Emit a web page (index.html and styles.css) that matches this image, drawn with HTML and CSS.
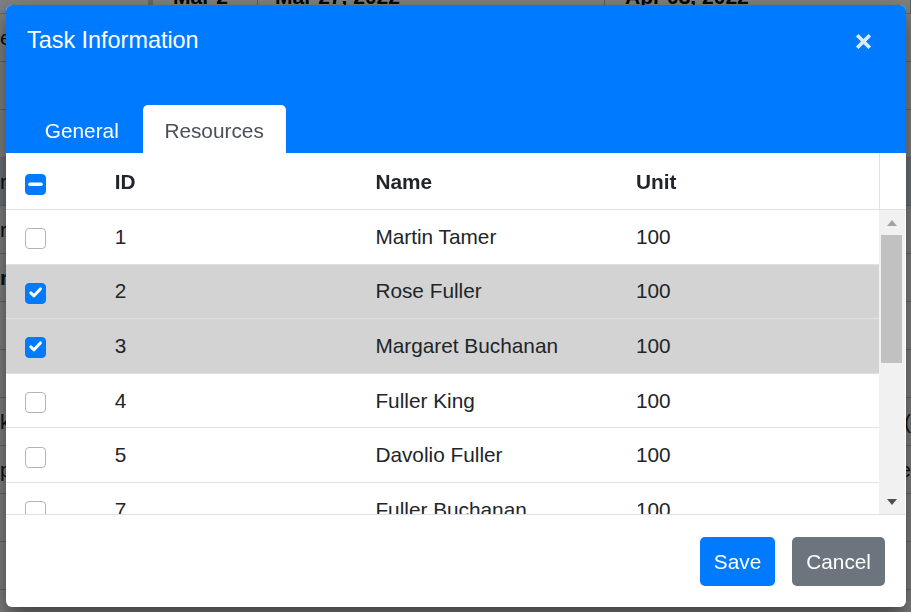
FILE: index.html
```html
<!DOCTYPE html>
<html lang="en">
<head>
<meta charset="utf-8">
<title>Task Information</title>
<link rel="stylesheet" href="styles.css">
</head>
<body>
<div class="page">
  <div class="timeline">
    <div class="tl-cell tl-left"></div>
    <div class="tl-cell tl-a">Mar 2</div>
    <div class="tl-cell tl-b">Mar 27, 2022</div>
    <div class="tl-cell tl-c">Apr 03, 2022</div>
  </div>
  <div class="bg-row"><span class="bg-left">e</span><span class="bg-right"></span></div>
  <div class="bg-row"><span class="bg-left"></span><span class="bg-right"></span></div>
  <div class="bg-row"><span class="bg-left"></span><span class="bg-right"></span></div>
  <div class="bg-row bg-sel"><span class="bg-left">rg</span><span class="bg-right"></span></div>
  <div class="bg-row"><span class="bg-left">rg</span><span class="bg-right"></span></div>
  <div class="bg-row"><span class="bg-left bold">nl</span><span class="bg-right"></span></div>
  <div class="bg-row"><span class="bg-left"></span><span class="bg-right"></span></div>
  <div class="bg-row"><span class="bg-left"></span><span class="bg-right"></span></div>
  <div class="bg-row"><span class="bg-left">k</span><span class="bg-right">(</span></div>
  <div class="bg-row"><span class="bg-left">p</span><span class="bg-right">e</span></div>
  <div class="bg-row"><span class="bg-left"></span><span class="bg-right"></span></div>
  <div class="bg-row"><span class="bg-left"></span><span class="bg-right"></span></div>
</div>

<div class="backdrop"></div>

<div class="modal">
  <div class="modal-header">
    <div class="title-row">
      <h5 class="title">Task Information</h5>
      <button class="close" aria-label="Close">
        <svg width="17" height="17" viewBox="0 0 17 17"><path d="M2.2 2.2 L14.8 14.8 M14.8 2.2 L2.2 14.8" stroke="currentColor" stroke-width="3.6" fill="none"/></svg>
      </button>
    </div>
    <ul class="tabs">
      <li class="tab">General</li>
      <li class="tab active">Resources</li>
    </ul>
  </div>

  <div class="grid-head">
    <div class="cols">
      <div class="cell cb-cell"><span class="cb on"><svg width="21" height="21" viewBox="0 0 21 21"><path d="M5 10.2 H16" stroke="#fff" stroke-width="3.6" stroke-linecap="round"/></svg></span></div>
      <div class="cell">ID</div>
      <div class="cell">Name</div>
      <div class="cell">Unit</div>
    </div>
    <div class="gutter"></div>
  </div>

  <div class="grid-body">
    <div class="rows">
      <div class="row">
        <div class="cell cb-cell"><span class="cb"></span></div>
        <div class="cell">1</div><div class="cell">Martin Tamer</div><div class="cell">100</div>
      </div>
      <div class="row sel">
        <div class="cell cb-cell"><span class="cb on"><svg width="21" height="21" viewBox="0 0 21 21"><path d="M5.8 9.8 L9 12.8 L15.4 5.9" stroke="#fff" stroke-width="3" fill="none" stroke-linecap="round" stroke-linejoin="round"/></svg></span></div>
        <div class="cell">2</div><div class="cell">Rose Fuller</div><div class="cell">100</div>
      </div>
      <div class="row sel">
        <div class="cell cb-cell"><span class="cb on"><svg width="21" height="21" viewBox="0 0 21 21"><path d="M5.8 9.8 L9 12.8 L15.4 5.9" stroke="#fff" stroke-width="3" fill="none" stroke-linecap="round" stroke-linejoin="round"/></svg></span></div>
        <div class="cell">3</div><div class="cell">Margaret Buchanan</div><div class="cell">100</div>
      </div>
      <div class="row">
        <div class="cell cb-cell"><span class="cb"></span></div>
        <div class="cell">4</div><div class="cell">Fuller King</div><div class="cell">100</div>
      </div>
      <div class="row">
        <div class="cell cb-cell"><span class="cb"></span></div>
        <div class="cell">5</div><div class="cell">Davolio Fuller</div><div class="cell">100</div>
      </div>
      <div class="row">
        <div class="cell cb-cell"><span class="cb"></span></div>
        <div class="cell">7</div><div class="cell">Fuller Buchanan</div><div class="cell">100</div>
      </div>
      <div class="row">
        <div class="cell cb-cell"><span class="cb"></span></div>
        <div class="cell">8</div><div class="cell">Jack Davolio</div><div class="cell">100</div>
      </div>
    </div>
    <div class="scrollbar">
      <div class="sb-btn"><span class="arrow up"></span></div>
      <div class="sb-thumb"></div>
      <div class="sb-space"></div>
      <div class="sb-btn"><span class="arrow down"></span></div>
    </div>
  </div>

  <div class="modal-footer">
    <button class="btn save">Save</button>
    <button class="btn cancel">Cancel</button>
  </div>
</div>
</body>
</html>
```

FILE: styles.css
```css
* { box-sizing: border-box; }

html, body {
  margin: 0;
  height: 100%;
}

body {
  font-family: "Liberation Sans", Arial, sans-serif;
  background: #fff;
  color: #212529;
  overflow: hidden;
}

/* background gantt page */
.page {
  margin-top: -16px;
}

.timeline {
  display: flex;
  height: 30px;
  border-bottom: 1px solid #ccc;
  font-size: 21px;
  font-weight: bold;
  color: #000;
}

.tl-cell {
  line-height: 26px;
  white-space: nowrap;
  overflow: hidden;
  border-right: 1px solid #bbb;
}

.tl-left { width: 153px; border-right: 5px solid #ccc; }
.tl-a { width: 105px; padding-left: 20px; }
.tl-b { width: 347px; padding-left: 17px; }
.tl-c { flex: 1; padding-left: 20px; }

.bg-row {
  display: flex;
  justify-content: space-between;
  height: 48px;
  border-bottom: 1px solid #ccc;
  font-size: 21px;
  line-height: 48px;
  color: #222;
}

.bg-row.bg-sel { background: #d6e4f4; }

.bg-left.bold { font-weight: bold; }

.backdrop {
  position: fixed;
  inset: 0;
  background: rgba(0, 0, 0, 0.5);
}

/* modal */
.modal {
  position: fixed;
  left: 6px;
  top: 5px;
  width: 900px;
  height: 602px;
  background: #fff;
  border-radius: 6px;
  box-shadow: 0 10px 21px rgba(0, 0, 0, 0.5);
  display: flex;
  flex-direction: column;
  overflow: hidden;
}

.modal-header {
  background: #007bff;
  height: 148px;
  padding: 21px 21px 0 21px;
  display: flex;
  flex-direction: column;
  justify-content: space-between;
  flex: none;
}

.title-row {
  display: flex;
  justify-content: space-between;
  align-items: flex-start;
}

.title {
  margin: 0;
  font-size: 23.4px;
  line-height: 28px;
  font-weight: normal;
  color: #fff;
}

.close {
  margin: 7px 13px 0 0;
  padding: 0;
  border: 0;
  background: none;
  width: 17px;
  height: 17px;
  color: #dde9ff;
  display: block;
}

.close svg { display: block; }

.tabs {
  display: flex;
  gap: 2px;
  margin: 0 0 0 -4px;
  padding: 0;
  list-style: none;
}

.tab {
  height: 48px;
  padding: 5px 21.8px 0;
  line-height: 42px;
  font-size: 20.8px;
  color: #fff;
  border-radius: 5px 5px 0 0;
}

.tab.active {
  background: #fff;
  color: #495057;
}

/* grid */
.grid-head {
  display: flex;
  height: 57px;
  border-bottom: 1px solid #dee2e6;
  flex: none;
}

.cols,
.row {
  width: 873px;
  display: grid;
  grid-template-columns: 91.2px repeat(3, 1fr);
  align-items: center;
  font-size: 20.8px;
}

.cols {
  font-weight: bold;
  padding-top: 2px;
}

.gutter {
  flex: 1;
  border-left: 1px solid #dee2e6;
}

.cell {
  padding-left: 17.6px;
  white-space: nowrap;
}

.cb-cell {
  padding-left: 19px;
  display: flex;
}

.cb {
  width: 21px;
  height: 21px;
  margin-top: 4px;
  border: 1px solid #adb5bd;
  border-radius: 4px;
  background: #fff;
  display: block;
  position: relative;
}

.cb.on {
  background: #007bff;
  border-color: #007bff;
}

.cb svg {
  position: absolute;
  left: -1px;
  top: -1px;
}

.grid-body {
  display: flex;
  height: 305px;
  border-bottom: 1px solid #dee2e6;
  flex: none;
}

.rows {
  width: 873px;
  overflow: hidden;
}

.row {
  height: 54.6px;
  border-bottom: 1px solid #dee2e6;
  background: #fff;
}

.row.sel { background: #d3d3d3; }

.scrollbar {
  width: 26px;
  background: #f1f1f1;
  display: flex;
  flex-direction: column;
}

.sb-btn {
  height: 25px;
  display: flex;
  justify-content: center;
  align-items: center;
}

.sb-thumb {
  height: 128px;
  margin: 0 3px 0 2px;
  background: #c1c1c1;
}

.sb-space { flex: 1; }

.arrow {
  width: 0;
  height: 0;
  border-left: 5px solid transparent;
  border-right: 5px solid transparent;
}

.arrow.up {
  border-bottom: 6px solid #a3a3a3;
  margin-top: 1px;
}

.arrow.down {
  border-top: 6px solid #505050;
  margin-top: 1px;
}

/* footer */
.modal-footer {
  flex: 1;
  display: flex;
  justify-content: flex-end;
  align-items: flex-start;
  gap: 17px;
  padding: 22px 21px 0;
}

.btn {
  height: 49px;
  padding: 0 14px;
  border: 0;
  border-radius: 5px;
  font-family: inherit;
  font-size: 20.8px;
  line-height: 49px;
  color: #fff;
}

.save { background: #007bff; }
.cancel { background: #6c757d; }
```
